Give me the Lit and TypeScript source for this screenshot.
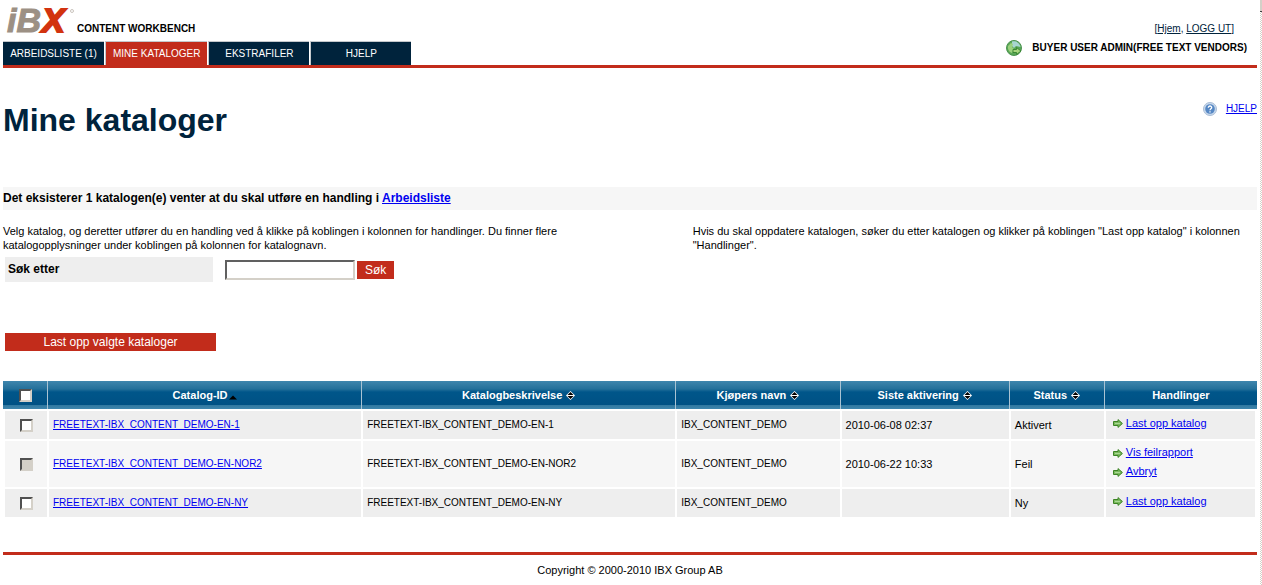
import { LitElement, html, css, nothing } from "lit";
import { customElement, state } from "lit/decorators.js";

type Sort = "asc" | "both" | "none";

interface Catalog {
  id: string;
  buyer: string;
  activated: string;
  status: string;
  actions: string[];
  disabled?: boolean;
}

const CATALOGS: Catalog[] = [
  { id: "FREETEXT-IBX_CONTENT_DEMO-EN-1", buyer: "IBX_CONTENT_DEMO", activated: "2010-06-08 02:37", status: "Aktivert", actions: ["Last opp katalog"] },
  { id: "FREETEXT-IBX_CONTENT_DEMO-EN-NOR2", buyer: "IBX_CONTENT_DEMO", activated: "2010-06-22 10:33", status: "Feil", actions: ["Vis feilrapport", "Avbryt"], disabled: true },
  { id: "FREETEXT-IBX_CONTENT_DEMO-EN-NY", buyer: "IBX_CONTENT_DEMO", activated: "", status: "Ny", actions: ["Last opp katalog"] },
];

const COLUMNS: { label: string; sort: Sort }[] = [
  { label: "Catalog-ID", sort: "asc" },
  { label: "Katalogbeskrivelse", sort: "both" },
  { label: "Kjøpers navn", sort: "both" },
  { label: "Siste aktivering", sort: "both" },
  { label: "Status", sort: "both" },
  { label: "Handlinger", sort: "none" },
];

const TABS = ["ARBEIDSLISTE (1)", "MINE KATALOGER", "EKSTRAFILER", "HJELP"];

const arrowIcon = html`<svg class="arrow" width="10" height="9" viewBox="0 0 10 9" aria-hidden="true">
  <path d="M.5 2.5H5V.6L9.4 4.500 5 8.400V6.500H.5z" fill="#79b95c" stroke="#3c8324"/>
  <path d="M2 4.500h5" stroke="#a9d893"/>
</svg>`;

const sortIcon = (kind: Sort) =>
  kind === "none"
    ? nothing
    : kind === "asc"
      ? html`<svg class="sort-asc" width="8" height="8" viewBox="0 0 8 8" aria-hidden="true"><path d="M0 6.500 4 2.500l4 4z" fill="#000"/></svg>`
      : html`<svg class="sort-both" width="9" height="9" viewBox="0 0 9 9" aria-hidden="true">
          <path d="M4.500 0 9 4.500 4.500 9 0 4.500z" fill="#fff"/>
          <path d="M4.500 1 7.500 4h-6zM1.500 5h6l-3 3z" fill="#000"/>
        </svg>`;

@customElement("app-root")
export class AppRoot extends LitElement {
  @state() private active = 1;

  static styles = css`
    :host {
      display: flex;
      min-height: 100vh;
      background: #fff;
      color: #000;
      font: 11px/14px "Liberation Sans", Arial, sans-serif;
    }
    * { box-sizing: border-box; }
    a { color: #0000f0; text-underline-offset: 1px; }
    .page { flex: 1; min-width: 0; padding: 0 3px; }
    .edge {
      width: 2px;
      background: repeating-conic-gradient(#d4d0c8 0 25%, #fff 0 50%) 0 0 / 2px 2px;
    }
    .edge-cap { height: 12px; background: #d4d0c8; border-bottom: 1px solid #404040; }

    .header {
      display: flex;
      justify-content: space-between;
      align-items: flex-end;
      height: 68px;
      border-bottom: 3px solid #c22c1b;
      font-size: 10px;
    }
    .brand { display: flex; align-items: flex-end; height: 41px; padding-left: 2px; }
    .logo { display: block; }
    .logo-text { font: italic bold 34px "Liberation Sans", Arial, sans-serif; stroke-width: 1px; }
    .logo-grey { fill: #9c9084; stroke: #9c9084; }
    .logo-red { fill: #d2330f; stroke: #d2330f; stroke-width: 2px; }
    .product { font-weight: bold; padding-bottom: 5px; }
    .tabs { display: flex; gap: 1px; }
    .tab {
      min-width: 101px;
      height: 24px;
      padding: 0 7px;
      border: solid #c4c8cc;
      border-width: 1px 0 0 1px;
      background: #00233c;
      color: #fff;
      text-align: center;
      text-decoration: none;
      line-height: 24px;
      white-space: nowrap;
    }
    .tab:first-child { border-left: 0; }
    .tab.active { background: #c22c1b; }
    .account { padding: 0 10px 7px 0; }
    .session { padding-right: 13px; text-align: right; color: #00233c; }
    .session a { color: #00233c; }
    .user { display: flex; align-items: center; gap: 10px; height: 20px; font-weight: bold; margin-top: 2px; }

    .title-row {
      display: flex;
      justify-content: space-between;
      align-items: flex-start;
      padding-top: 32px;
      height: 119px;
    }
    .title { margin: 0; font-size: 32px; line-height: 40px; color: #00233c; }
    .help { display: flex; align-items: center; gap: 9px; padding-top: 2px; font-size: 10px; }
    .notice { margin: 0; background: #f6f6f6; font-size: 12px; font-weight: bold; line-height: 23px; }
    .intro { display: grid; grid-template-columns: 55% 45%; padding-top: 14px; }
    .intro p { margin: 0; max-width: 560px; }

    .search { display: flex; align-items: center; padding: 5px 0 0 2px; }
    .search-label {
      width: 208px;
      margin-right: 12px;
      padding-left: 3px;
      background: #eee;
      font-size: 12px;
      font-weight: bold;
      line-height: 25px;
    }
    .search-box {
      width: 130px;
      height: 20px;
      margin: 0 2px 0 0;
      padding: 1px 3px;
      border: 2px solid;
      border-color: #606060 #d4d0c8 #d4d0c8 #606060;
      background: #fff;
      font: inherit;
    }
    .button {
      height: 18px;
      padding: 0 8px;
      border: 0;
      background: #c22c1b;
      color: #fff;
      font: 12px/18px "Liberation Sans", Arial, sans-serif;
    }
    .bulk { padding: 51px 0 30px 2px; }
    .bulk .button { display: block; width: 211px; }

    .catalogs { width: 100%; table-layout: fixed; border-collapse: separate; border-spacing: 0; }
    .col-check { width: 44px; }
    .col-wide { width: 25.05%; }
    .col-buyer { width: 13.1%; }
    .col-date { width: 13.5%; }
    .col-status { width: 95px; }
    .head {
      height: 28px;
      padding: 0;
      border-left: 1px solid #a9c3d3;
      color: #fff;
      white-space: nowrap;
    }
    .head:first-child { border-left: 0; }
    .head-row {
      background: linear-gradient(#3f86ad 0, #24709a 8px, #00568a 11px, #005184 24px, #2f779f 24px, #3f86ad 28px);
    }
    .cell {
      height: 30px;
      padding: 4px;
      border: solid #fff;
      border-width: 2px 0 0 2px;
      background: #eee;
    }
    .cell:last-child { border-right-width: 2px; padding-left: 7px; }
    .row:nth-child(even) .cell { background: #f6f6f6; }
    .cell.check { text-align: center; }
    .cell.code { font-size: 10px; }
    .tick {
      appearance: none;
      display: inline-block;
      width: 13px;
      height: 13px;
      margin: 0;
      border: 2px solid;
      border-color: #505050 #d4d0c8 #d4d0c8 #505050;
      background: #fff;
      vertical-align: middle;
    }
    .tick:checked { background: #0a246a; }
    .tick:disabled { background: #d4d0c8; }
    .sort-asc { margin-left: 1px; vertical-align: -2px; }
    .sort-both { margin-left: 4px; vertical-align: -1px; }
    .actions { display: grid; gap: 5px; padding-bottom: 5px; }
    .action { display: flex; align-items: center; gap: 3px; }
    .arrow { flex: none; margin-top: 2px; }

    .footer {
      margin-top: 35px;
      border-top: 3px solid #c22c1b;
      padding-top: 8px;
      text-align: center;
    }
  `;

  private catalogRow(c: Catalog) {
    return html`<tr class="row">
      <td class="cell check"><input class="tick" type="checkbox" aria-label=${c.id} ?disabled=${c.disabled}></td>
      <td class="cell code"><a href="#">${c.id}</a></td>
      <td class="cell code">${c.id}</td>
      <td class="cell code">${c.buyer}</td>
      <td class="cell">${c.activated}</td>
      <td class="cell">${c.status}</td>
      <td class="cell"><div class="actions">
        ${c.actions.map((a) => html`<div class="action">${arrowIcon}<a href="#">${a}</a></div>`)}
      </div></td>
    </tr>`;
  }

  render() {
    return html`
      <div class="page">
        <header class="header">
          <div>
            <div class="brand">
              <svg class="logo" width="72" height="41" viewBox="0 0 72 41" role="img" aria-label="iBX">
                <text class="logo-text" x="2" y="32"><tspan class="logo-grey">iB</tspan><tspan class="logo-red" dx="1">X</tspan></text>
                <circle cx="67" cy="11" r="1.500" fill="none" stroke="#b5aca4" stroke-width=".7"/>
              </svg>
              <span class="product">CONTENT WORKBENCH</span>
            </div>
            <nav class="tabs">
              ${TABS.map((t, i) => html`<a href="#" class="tab ${i === this.active ? "active" : ""}" @click=${() => (this.active = i)}>${t}</a>`)}
            </nav>
          </div>
          <div class="account">
            <div class="session">[<a href="#">Hjem</a>, <a href="#">LOGG UT</a>]</div>
            <div class="user">
              <svg width="16" height="16" viewBox="0 0 16 16" aria-hidden="true">
                <circle cx="8" cy="8" r="7.500" fill="#58a655" stroke="#4b9350"/>
                <path d="M6 1.500C10 .5 14 3 14.500 7L10 6 8 8 6 6z" fill="#a8d5d0"/>
                <path d="M2 6l3-3 2 1-1 3 2 2-2 4C3 12 1.500 9 2 6z" fill="#9bd17d"/>
                <path d="M7 9.500h3.500v-2L15 11l-4.500 3.500v-2H7z" fill="#a5d47c" stroke="#35822f" stroke-width=".9"/>
              </svg>
              <span>BUYER USER ADMIN(FREE TEXT VENDORS)</span>
            </div>
          </div>
        </header>

        <main>
          <div class="title-row">
            <h1 class="title">Mine kataloger</h1>
            <div class="help">
              <svg width="14" height="14" viewBox="0 0 14 14" aria-hidden="true">
                <circle cx="7" cy="7" r="6.500" fill="#c9d9ec" stroke="#a9bdd6"/>
                <circle cx="7" cy="7" r="4.800" fill="#5587c4"/>
                <path d="M5.300 5.800C5.300 3.300 8.800 3.500 8.700 5.600 8.600 6.700 7 6.700 7 8.200M7 9.300v1.200" fill="none" stroke="#fff" stroke-width="1.300"/>
              </svg>
              <a href="#">HJELP</a>
            </div>
          </div>
          <p class="notice">Det eksisterer 1 katalogen(e) venter at du skal utføre en handling i <a href="#">Arbeidsliste</a></p>
          <div class="intro">
            <p>Velg katalog, og deretter utfører du en handling ved å klikke på koblingen i kolonnen for handlinger. Du finner flere katalogopplysninger under koblingen på kolonnen for katalognavn.</p>
            <p>Hvis du skal oppdatere katalogen, søker du etter katalogen og klikker på koblingen "Last opp katalog" i kolonnen "Handlinger".</p>
          </div>
          <form class="search" @submit=${(e: Event) => e.preventDefault()}>
            <label class="search-label" for="query">Søk etter</label>
            <input class="search-box" id="query" type="text">
            <button class="button" type="submit">Søk</button>
          </form>
          <div class="bulk"><button class="button" type="button">Last opp valgte kataloger</button></div>
          <table class="catalogs">
            <colgroup>
              <col class="col-check"><col class="col-wide"><col class="col-wide"><col class="col-buyer"><col class="col-date"><col class="col-status"><col>
            </colgroup>
            <thead>
              <tr class="head-row">
                <th class="head"><input class="tick" type="checkbox" aria-label="Velg alle"></th>
                ${COLUMNS.map((c) => html`<th class="head" scope="col">${c.label}${sortIcon(c.sort)}</th>`)}
              </tr>
            </thead>
            <tbody>${CATALOGS.map((c) => this.catalogRow(c))}</tbody>
          </table>
        </main>
        <footer class="footer">Copyright © 2000-2010 IBX Group AB</footer>
      </div>
      <div class="edge"><div class="edge-cap"></div></div>
    `;
  }
}
